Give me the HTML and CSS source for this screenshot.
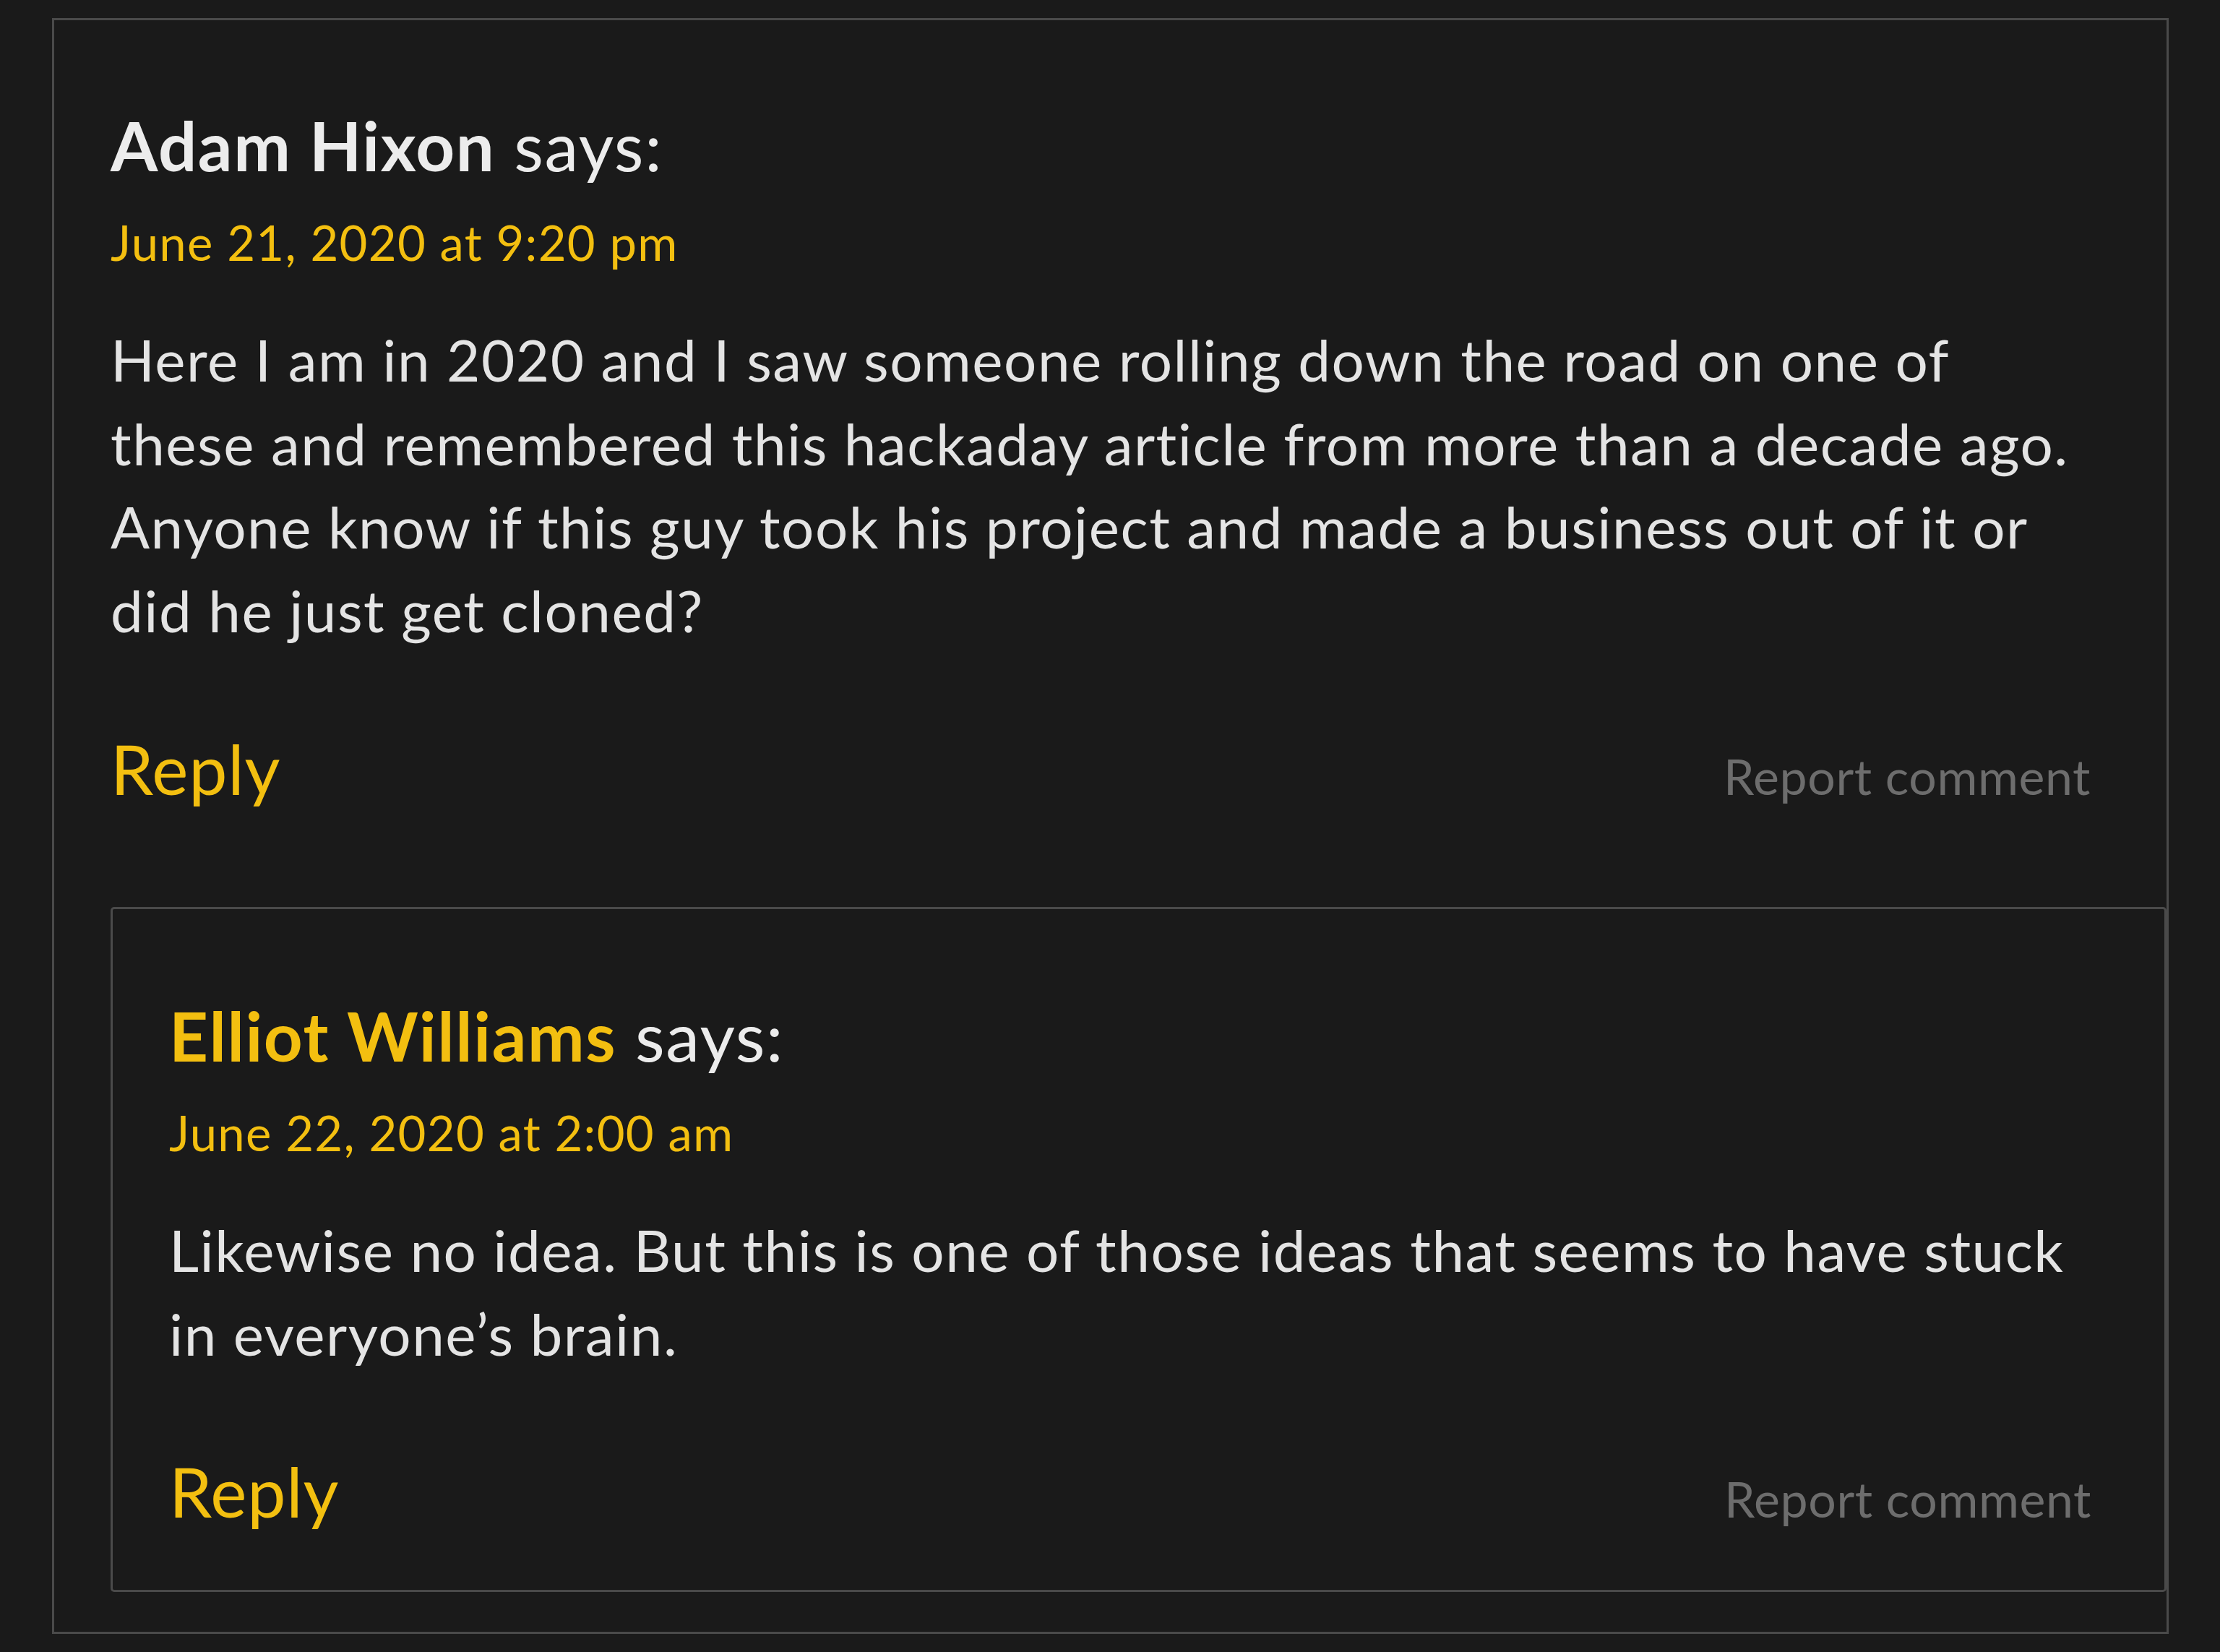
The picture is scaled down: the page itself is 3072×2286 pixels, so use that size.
FILE: index.html
```html
<!DOCTYPE html>
<html lang="en">
<head>
<meta charset="utf-8">
<title>Comments</title>
<link rel="stylesheet" href="styles.css">
</head>
<body>
<ol class="comment-list">
  <li class="comment">
    <article class="comment-body">
      <footer class="comment-meta">
        <div class="comment-author"><b class="fn">Adam Hixon</b> <span class="says">says:</span></div>
        <div class="comment-date"><a href="#">June 21, 2020 at 9:20 pm</a></div>
      </footer>
      <div class="comment-content">
        <p>Here I am in 2020 and I saw someone rolling down the road on one of<br>these and remembered this hackaday article from more than a decade ago.<br>Anyone know if this guy took his project and made a business out of it or<br>did he just get cloned?</p>
      </div>
      <div class="comment-actions">
        <a class="reply" href="#">Reply</a>
        <a class="report" href="#">Report comment</a>
      </div>
    </article>
    <ol class="children">
      <li class="comment">
        <article class="comment-body">
          <footer class="comment-meta">
            <div class="comment-author"><b class="fn staff">Elliot Williams</b> <span class="says">says:</span></div>
            <div class="comment-date"><a href="#">June 22, 2020 at 2:00 am</a></div>
          </footer>
          <div class="comment-content">
            <p>Likewise no idea. But this is one of those ideas that seems to have stuck<br>in everyone’s brain.</p>
          </div>
          <div class="comment-actions">
            <a class="reply" href="#">Reply</a>
            <a class="report" href="#">Report comment</a>
          </div>
        </article>
      </li>
    </ol>
  </li>
</ol>
</body>
</html>
```
FILE: styles.css
```css
html, body {
  margin: 0;
  padding: 0;
  background: #1a1a1a;
}

body {
  font-family: "Lato", "Liberation Sans", sans-serif;
  color: #e2e2e2;
  -webkit-font-smoothing: antialiased;
}

a {
  text-decoration: none;
}

.comment-list,
.children {
  list-style: none;
  margin: 0;
  padding: 0;
}

.comment-list {
  margin: 25px 0 0 72px;
  width: 2929px;
}

.comment {
  box-sizing: border-box;
  border: 3px solid #4a4a4a;
  padding: 113px 0 0 78px;
  background: #1a1a1a;
}

.children {
  margin: 55px 0 55px 0;
}

.children .comment {
  border-radius: 5px;
  padding-top: 115px;
}

.comment-body {
  padding: 0 105px 77px 0;
}

.children .comment-body {
  padding-right: 101px;
}

.comment-author {
  font-size: 94px;
  line-height: 120px;
  letter-spacing: 1.6px;
  color: #ececec;
  white-space: nowrap;
}

.fn {
  font-weight: 700;
}

.fn.staff {
  color: #f3bf10;
}

.says {
  font-weight: 400;
}

.comment-date {
  margin-top: 24px;
  font-size: 67px;
  line-height: 100px;
  letter-spacing: 1.3px;
}

.comment-date a {
  color: #f3bf10;
}

.comment-content p {
  margin: 55px 0 0 0;
  font-size: 80px;
  line-height: 115.7px;
  letter-spacing: 1.5px;
  white-space: nowrap;
  color: #e4e4e4;
}

.comment-actions {
  margin-top: 100px;
  display: flex;
  justify-content: space-between;
  align-items: baseline;
  height: 120px;
}

.reply {
  font-size: 95px;
  line-height: 120px;
  letter-spacing: 0.8px;
  color: #f3bf10;
}

.report {
  font-size: 68px;
  line-height: 80px;
  letter-spacing: 0.6px;
  color: #6d6d6d;
}
```
